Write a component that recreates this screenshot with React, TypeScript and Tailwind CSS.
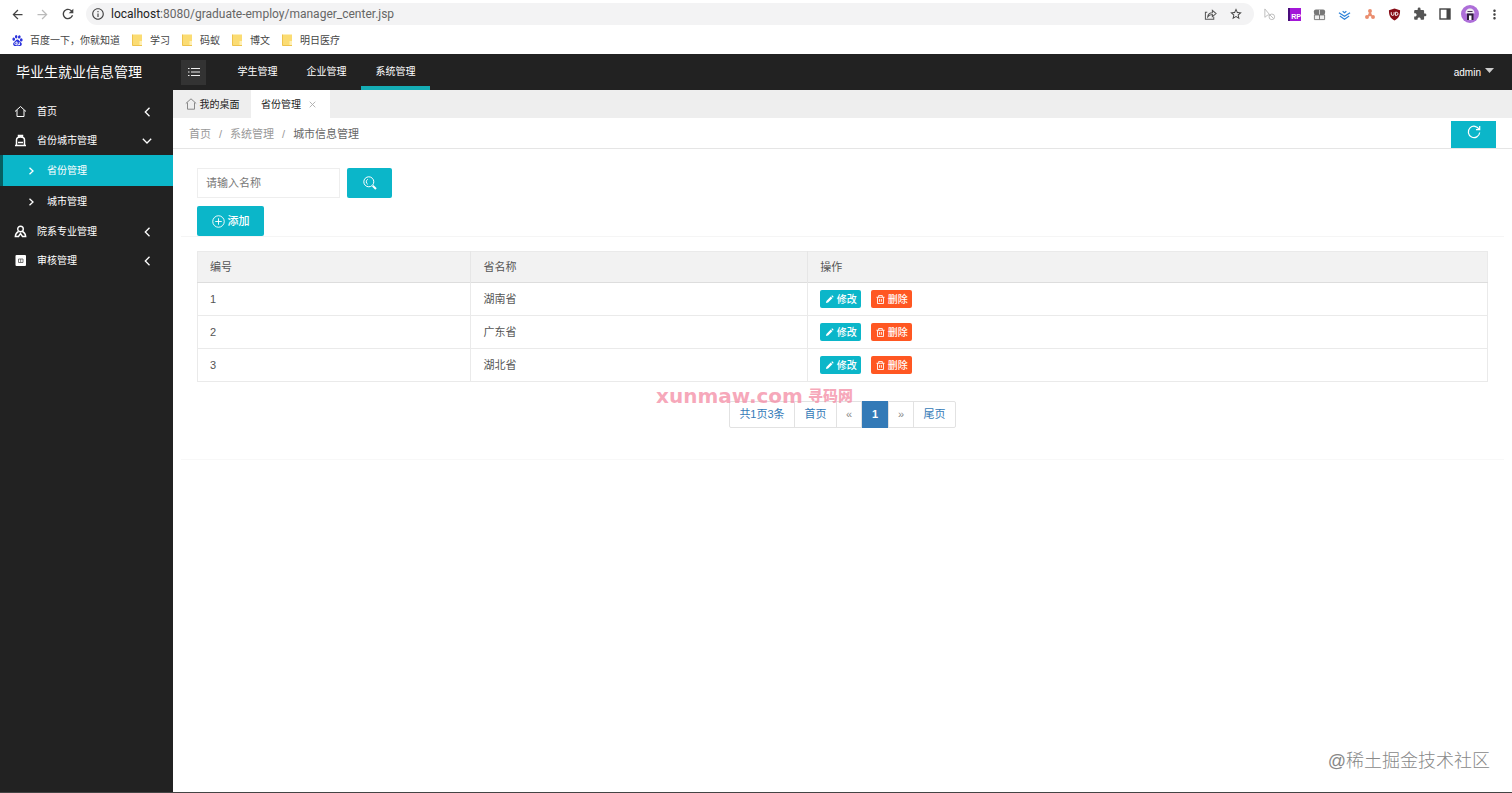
import type { ReactNode } from "react";
import clsx from "clsx";
import {
  MdArrowBack,
  MdArrowForward,
  MdExtension,
  MdInfoOutline,
  MdMoreVert,
  MdRefresh,
  MdStarBorder,
} from "react-icons/md";
import { SiBaidu } from "react-icons/si";

const provinces = [
  { id: 1, name: "湖南省" },
  { id: 2, name: "广东省" },
  { id: 3, name: "湖北省" },
];

const bookmarks = ["学习", "码蚁", "博文", "明日医疗"];

export default function App() {
  return (
    <div className="flex min-h-screen flex-col bg-white font-['Liberation_Sans','Noto_Sans_CJK_SC',sans-serif] text-[11px] text-[#555]">
      <BrowserBar />
      <Header />
      <div className="flex flex-1 border-b border-[#444]">
        <Sidebar />
        <main className="relative min-w-0 flex-1">
          <TabBar />
          <Breadcrumb />
          <ProvincePanel />
          <div className="absolute right-[22px] bottom-[18px] text-[18px] leading-[26px] font-light text-[#888]">
            @稀土掘金技术社区
          </div>
        </main>
      </div>
    </div>
  );
}

function BrowserBar() {
  return (
    <div className="flex h-[54px] flex-col bg-white text-[#5f6368]">
      <div className="flex h-7 items-center pr-[5px] pl-[10px]">
        <IconButton label="后退"><MdArrowBack className="size-[15px] text-[#444]" /></IconButton>
        <IconButton label="前进"><MdArrowForward className="size-[15px] text-[#bbb]" /></IconButton>
        <IconButton label="刷新"><MdRefresh className="size-[16px] text-[#444]" /></IconButton>
        <div className="ml-[6px] flex h-[22px] flex-1 items-center rounded-full bg-[#f3f3f4] pr-[6px] pl-[5px]">
          <MdInfoOutline className="size-[14px] text-[#444]" />
          <div className="ml-[6px] flex-1 font-['Roboto',sans-serif] text-[12px] leading-[18px] text-[#666]">
            <span className="text-[#222]">localhost</span>:8080/graduate-employ/manager_center.jsp
          </div>
          <IconButton label="分享"><ShareIcon /></IconButton>
          <IconButton label="收藏"><MdStarBorder className="size-[14px] text-[#444]" /></IconButton>
        </div>
        <div className="ml-2 flex items-center">
          <IconButton label="光标工具"><CursorIcon /></IconButton>
          <IconButton label="RP">
            <span className="flex size-[13px] items-end justify-end border-l-2 border-[#4a0c7c] bg-[#a316d8] text-[7px] leading-[9px] font-bold text-white">RP</span>
          </IconButton>
          <IconButton label="窗口"><BoxesIcon /></IconButton>
          <IconButton label="下载"><LayersIcon /></IconButton>
          <IconButton label="节点"><NodesIcon /></IconButton>
          <IconButton label="屏蔽"><ShieldIcon /></IconButton>
          <IconButton label="扩展程序"><MdExtension className="size-[14px] text-[#555]" /></IconButton>
          <IconButton label="侧边栏"><PanelIcon /></IconButton>
          <IconButton label="用户"><AvatarIcon /></IconButton>
          <IconButton label="更多"><MdMoreVert className="size-[15px] text-[#444]" /></IconButton>
        </div>
      </div>
      <div className="flex h-[24px] items-center gap-3 pl-[12px] text-[10px] text-[#444]">
        <a href="#" className="flex items-center gap-[7px]">
          <SiBaidu className="size-[11px] text-[#2a32dc]" />
          百度一下，你就知道
        </a>
        {bookmarks.map((name) => (
          <a key={name} href="#" className="flex items-center gap-[7px]">
            <FolderIcon />
            {name}
          </a>
        ))}
      </div>
    </div>
  );
}

function IconButton({ label, children }: { label: string; children: ReactNode }) {
  return (
    <button type="button" aria-label={label} className="flex h-5 w-[25px] shrink-0 items-center justify-center first:mr-[5px] first:w-[15px]">
      {children}
    </button>
  );
}

function Header() {
  return (
    <header className="flex h-9 items-center bg-[#222] text-white">
      <h1 className="w-[181px] pl-4 text-[14px] leading-5">毕业生就业信息管理</h1>
      <button type="button" aria-label="收起菜单" className="flex size-[25px] items-center justify-center bg-[#333]">
        <svg viewBox="0 0 12 10" className="h-[10px] w-3" stroke="#eee" strokeWidth="1.2">
          <path d="M3 1.5h9M3 5h9M3 8.5h9M0 1.5h1.5M0 5h1.5M0 8.5h1.5" />
        </svg>
      </button>
      <nav className="ml-[17px] flex h-full text-[10px]">
        {["学生管理", "企业管理", "系统管理"].map((name) => (
          <a
            key={name}
            href="#"
            className={clsx(
              "flex w-[69px] items-center justify-center border-b-4 pt-[2px]",
              name === "系统管理" ? "border-[#15adb5]" : "border-transparent"
            )}
          >
            {name}
          </a>
        ))}
      </nav>
      <button type="button" className="mr-[18px] ml-auto flex items-center gap-1 text-[10px]">
        admin
        <svg viewBox="0 0 9 5" className="mb-1 h-[5px] w-[9px]" fill="#ccc">
          <path d="M0 0h9L4.500 5z" />
        </svg>
      </button>
    </header>
  );
}

function Sidebar() {
  return (
    <nav className="w-[173px] shrink-0 bg-[#222] pt-[7px] text-[10px] text-white">
      <MenuItem icon={<HomeIcon />} label="首页" />
      <MenuItem icon={<BagIcon />} label="省份城市管理" open />
      <SubItem label="省份管理" active />
      <SubItem label="城市管理" />
      <MenuItem icon={<PersonIcon />} label="院系专业管理" />
      <MenuItem icon={<CardIcon />} label="审核管理" />
    </nav>
  );
}

function MenuItem({ icon, label, open }: { icon: ReactNode; label: string; open?: boolean }) {
  return (
    <a href="#" className="flex h-[29px] items-center pr-[21px] pl-[14px]">
      {icon}
      <span className="ml-[10px] flex-1">{label}</span>
      <svg viewBox="0 0 10 10" className="size-[10px]" fill="none" stroke="#fff" strokeWidth="1.3">
        <path d={open ? "M.8 2.800 5 7l4.200-4.200" : "M7.500.8 3.300 5 7.500 9.200"} />
      </svg>
    </a>
  );
}

function SubItem({ label, active }: { label: string; active?: boolean }) {
  return (
    <a
      href="#"
      className={clsx(
        "flex h-[31px] items-center gap-3 border-l-[3px] pl-[25px]",
        active ? "border-[#065f62] bg-[#0bb6c9]" : "border-transparent"
      )}
    >
      <svg viewBox="0 0 7 8" className="h-2 w-[7px]" fill="none" stroke="#fff" strokeWidth="1.3">
        <path d="M1.500.8 5 4 1.500 7.200" />
      </svg>
      {label}
    </a>
  );
}

function TabBar() {
  return (
    <div className="flex h-7 bg-[#eeeeee] text-[10px] text-[#222]">
      <button type="button" className="flex w-[78px] items-center justify-center gap-[3px]">
        <svg viewBox="0 0 12 12" className="size-[12px]" fill="none" stroke="#888">
          <path d="M.8 5.500 6 .8l5.200 4.700M2.500 4.500v6.700h7V4.500" />
        </svg>
        我的桌面
      </button>
      <button type="button" className="flex w-[79px] items-center justify-center gap-2 bg-white pr-1">
        省份管理
        <svg viewBox="0 0 8 8" className="size-[7px]" stroke="#aaa">
          <path d="m.8.8 6.400 6.400M7.200.8.8 7.200" />
        </svg>
      </button>
    </div>
  );
}

function Breadcrumb() {
  return (
    <div className="flex h-[31px] items-center border-b border-[#e5e5e5] px-4 pt-[2px] text-[#999]">
      <a href="#">首页</a>
      <span className="mx-2">/</span>
      <a href="#">系统管理</a>
      <span className="mx-2">/</span>
      <span className="text-[#666]">城市信息管理</span>
      <button type="button" aria-label="刷新列表" className="ml-auto flex h-[27px] w-[45px] items-center justify-center bg-[#0bb6c9]">
        <svg viewBox="0 0 14 14" className="mb-1 size-[14px]" fill="none" stroke="#fff" strokeWidth="1.2">
          <path d="M12.200 4.500A5.700 5.700 0 1 0 12.700 7.500M12.700 1v3.700H9" />
        </svg>
      </button>
    </div>
  );
}

function ProvincePanel() {
  return (
    <>
      <div className="mx-2 border-b border-[#f5f5f5] pt-[19px] pl-4">
        <form className="flex gap-[7px]">
          <input
            type="text"
            aria-label="名称"
            placeholder="请输入名称"
            className="h-[30px] w-[143px] border border-[#eee] px-2 outline-none placeholder:text-[#777]"
          />
          <button type="button" aria-label="搜索" className="flex h-[30px] w-[45px] items-center justify-center rounded-xs bg-[#0bb6c9]">
            <svg viewBox="0 0 14 14" className="size-[14px]" fill="none" stroke="#fff">
              <circle cx="5.800" cy="5.800" r="5" />
              <path d="M4.800 3.300a2.800 2.800 0 0 0 0 5" />
              <path d="m9.700 9.700 3.300 3.300" strokeWidth="2" />
            </svg>
          </button>
        </form>
        <button type="button" className="mt-2 flex h-[30px] w-[67px] items-center justify-center gap-[3px] rounded-xs bg-[#0bb6c9] font-medium text-white">
          <svg viewBox="0 0 14 14" className="size-[13px]" fill="none" stroke="#fff">
            <circle cx="7" cy="7" r="6.200" />
            <path d="M7 3.500v7M3.500 7h7" />
          </svg>
          添加
        </button>
      </div>
      <div className="relative mx-2 border-b border-[#f8f8f8] px-4 pt-[14px] pb-[31px]">
        <table className="w-full table-fixed border-collapse border border-[#eaeaea] text-left">
          <thead className="bg-[#f2f2f2]">
            <tr className="h-[31px] border-b border-[#ddd]">
              <th className="w-[21.200%] border-r border-[#e6e6e6] px-3 font-normal">编号</th>
              <th className="w-[26.100%] border-r border-[#e6e6e6] px-3 font-normal">省名称</th>
              <th className="px-3 font-normal">操作</th>
            </tr>
          </thead>
          <tbody>
            {provinces.map((item) => (
              <tr key={item.id} className="h-[33px] border-b border-[#eaeaea]">
                <td className="border-r border-[#eaeaea] px-3">{item.id}</td>
                <td className="border-r border-[#eaeaea] px-3">{item.name}</td>
                <td className="px-3">
                  <div className="flex gap-[10px] text-[10px] font-medium text-white">
                    <button type="button" className="flex h-[18px] w-[41px] items-center justify-center gap-[3px] rounded-xs bg-[#0bb6c9]">
                      <svg viewBox="0 0 10 10" className="size-[9px]" fill="#fff">
                        <path d="m1 9 .6-2.400 4.800-4.800 1.800 1.800-4.800 4.800zM7 1.200 8 .4 9.600 2l-.8 1z" />
                      </svg>
                      修改
                    </button>
                    <button type="button" className="flex h-[18px] w-[41px] items-center justify-center gap-[3px] rounded-xs bg-[#ff5722]">
                      <svg viewBox="0 0 10 10" className="size-[9px]" fill="none" stroke="#fff">
                        <path d="M.5 2.500h9M3 2.500v-2h4v2M1.700 2.500v7h6.600v-7M4 4.500v3M6 4.500v3" />
                      </svg>
                      删除
                    </button>
                  </div>
                </td>
              </tr>
            ))}
          </tbody>
        </table>
        <Pagination />
        <div className="absolute bottom-[51px] left-[475px] flex items-center gap-[5px] font-bold whitespace-nowrap text-[#f48ba4]/75">
          <span className="font-['DejaVu_Sans',sans-serif] text-[20px] leading-6 font-black">xunmaw.com</span>
          <span className="text-[15px] leading-6 font-black">寻码网</span>
        </div>
      </div>
    </>
  );
}

function Pagination() {
  return (
    <div className="mt-[19px] flex justify-center text-[#337ab7]">
      <div className="flex h-[27px] divide-x divide-[#e2e2e2] rounded-xs border border-[#e2e2e2]">
        <span className="flex w-[65px] items-center justify-center">共1页3条</span>
        <button type="button" className="w-[42px]">首页</button>
        <button type="button" aria-label="上一页" className="w-[25px] text-[#888]">«</button>
        <button type="button" className="-my-px w-[27px] bg-[#337ab7] font-bold text-white">1</button>
        <button type="button" aria-label="下一页" className="w-[25px] text-[#888]">»</button>
        <button type="button" className="w-[41px]">尾页</button>
      </div>
    </div>
  );
}

function HomeIcon() {
  return (
    <svg viewBox="0 0 13 13" className="size-[13px]" fill="none" stroke="#fff">
      <path d="M1 6.500 6.500 1.500 12 6.500M3 5v6.500h7V5" />
    </svg>
  );
}

function BagIcon() {
  return (
    <svg viewBox="0 0 13 13" className="size-[13px]" fill="none" stroke="#fff" strokeWidth="1.500">
      <path d="M2.500 11.500V6c0-2 1.500-3 4-3s4 1 4 3v5.500M1 11.500h11M4.500 3V1.500h4V3M4 8.500h5" />
    </svg>
  );
}

function PersonIcon() {
  return (
    <svg viewBox="0 0 13 13" className="size-[13px]" fill="none" stroke="#fff" strokeWidth="1.400">
      <circle cx="6.500" cy="4" r="2.800" />
      <path d="M4.500 6.500C2.500 7.500 1.500 9 1.300 11.500h3.200l2-3 2 3h3.200c-.2-2.500-1.200-4-3.200-5" />
    </svg>
  );
}

function CardIcon() {
  return (
    <svg viewBox="0 0 13 13" className="size-[13px]">
      <rect x="1.500" y="1" width="10.500" height="11" rx="1" fill="#fff" />
      <path d="M4.500 5h4.500v3.500H4.500zM6.700 5v3.500" fill="none" stroke="#555" strokeWidth=".8" />
    </svg>
  );
}

function FolderIcon() {
  return (
    <svg viewBox="0 0 11 12" className="h-3 w-[11px]">
      <path d="M.5.500h9.500v11H.500z" fill="#fbdc73" />
      <path d="M7.500 7h2.500v4.500H7.500z" fill="#fff0b5" />
      <path d="M.5.500v11h9.500" fill="none" stroke="#eec34c" />
    </svg>
  );
}

function ShareIcon() {
  return (
    <svg viewBox="0 0 14 14" className="size-[13px]" fill="none" stroke="#555" strokeWidth="1.100">
      <path d="M3.500 4.500H1.500v7.500h9V9.500M4 9.500c.3-3 2-4.500 5-4.500V2.500L13 6 9 9.300V7C7 7 5.500 7.500 4 9.500z" />
    </svg>
  );
}

function CursorIcon() {
  return (
    <svg viewBox="0 0 14 14" className="size-[13px]" fill="none" stroke="#bbb">
      <path d="M2 1v9l2.500-2L7 7z" />
      <circle cx="9.500" cy="9.500" r="3" />
      <path d="m7.500 7.500 4 4" />
    </svg>
  );
}

function BoxesIcon() {
  return (
    <svg viewBox="0 0 14 14" className="size-[13px]">
      <path d="M1.500 7.500h11v5h-11zM7 7.500v5" fill="#eee" stroke="#777" />
      <rect x="1" y="1.500" width="12" height="6" rx="2" fill="#777" />
      <path d="M7 2v5" stroke="#ddd" />
    </svg>
  );
}

function LayersIcon() {
  return (
    <svg viewBox="0 0 14 14" className="size-[13px]" fill="none" stroke="#2f83d8" strokeWidth="1.300">
      <path d="m1 5 6 4 6-4M2 8.500l5 3.500 5-3.500M5 3.500l2 1.500 2-1.500" />
    </svg>
  );
}

function NodesIcon() {
  return (
    <svg viewBox="0 0 14 14" className="size-[12px]" fill="#ea8d6e">
      <circle cx="7" cy="3.500" r="2.300" />
      <circle cx="3.500" cy="10.500" r="2.300" />
      <circle cx="10.500" cy="10.500" r="2.300" />
      <path d="M6 5h2l2 4.500H4z" />
    </svg>
  );
}

function ShieldIcon() {
  return (
    <svg viewBox="0 0 14 14" className="size-[13px]">
      <path d="M7 .5 13 2.500c0 5-1 8.500-6 11-5-2.500-6-6-6-11z" fill="#860c16" />
      <path d="M3.500 4.500v2q0 1.500 1.500 1.500t1.500-1.500v-2M8 4.500V8h.8q2 0 2-1.700T8.800 4.500z" fill="none" stroke="#fff" />
    </svg>
  );
}

function PanelIcon() {
  return (
    <svg viewBox="0 0 12 12" className="size-3">
      <rect x="1" y="1" width="10" height="10" fill="none" stroke="#444" strokeWidth="1.400" />
      <path d="M7.500 1H11v10H7.500z" fill="#444" />
    </svg>
  );
}

function AvatarIcon() {
  return (
    <svg viewBox="0 0 18 18" className="size-[18px]">
      <circle cx="9" cy="9" r="9" fill="#ad6ed8" />
      <path d="M4.500 8.500C4.500 5 6.500 3.500 9 3.500s4.500 1.500 4.500 5z" fill="#eee" />
      <path d="M6 8.500h6.500V15H6z" fill="#2c2038" />
      <path d="M8 10.500h2.500V15H8z" fill="#fff" />
      <path d="M6.500 6.500h5" stroke="#493355" />
    </svg>
  );
}
